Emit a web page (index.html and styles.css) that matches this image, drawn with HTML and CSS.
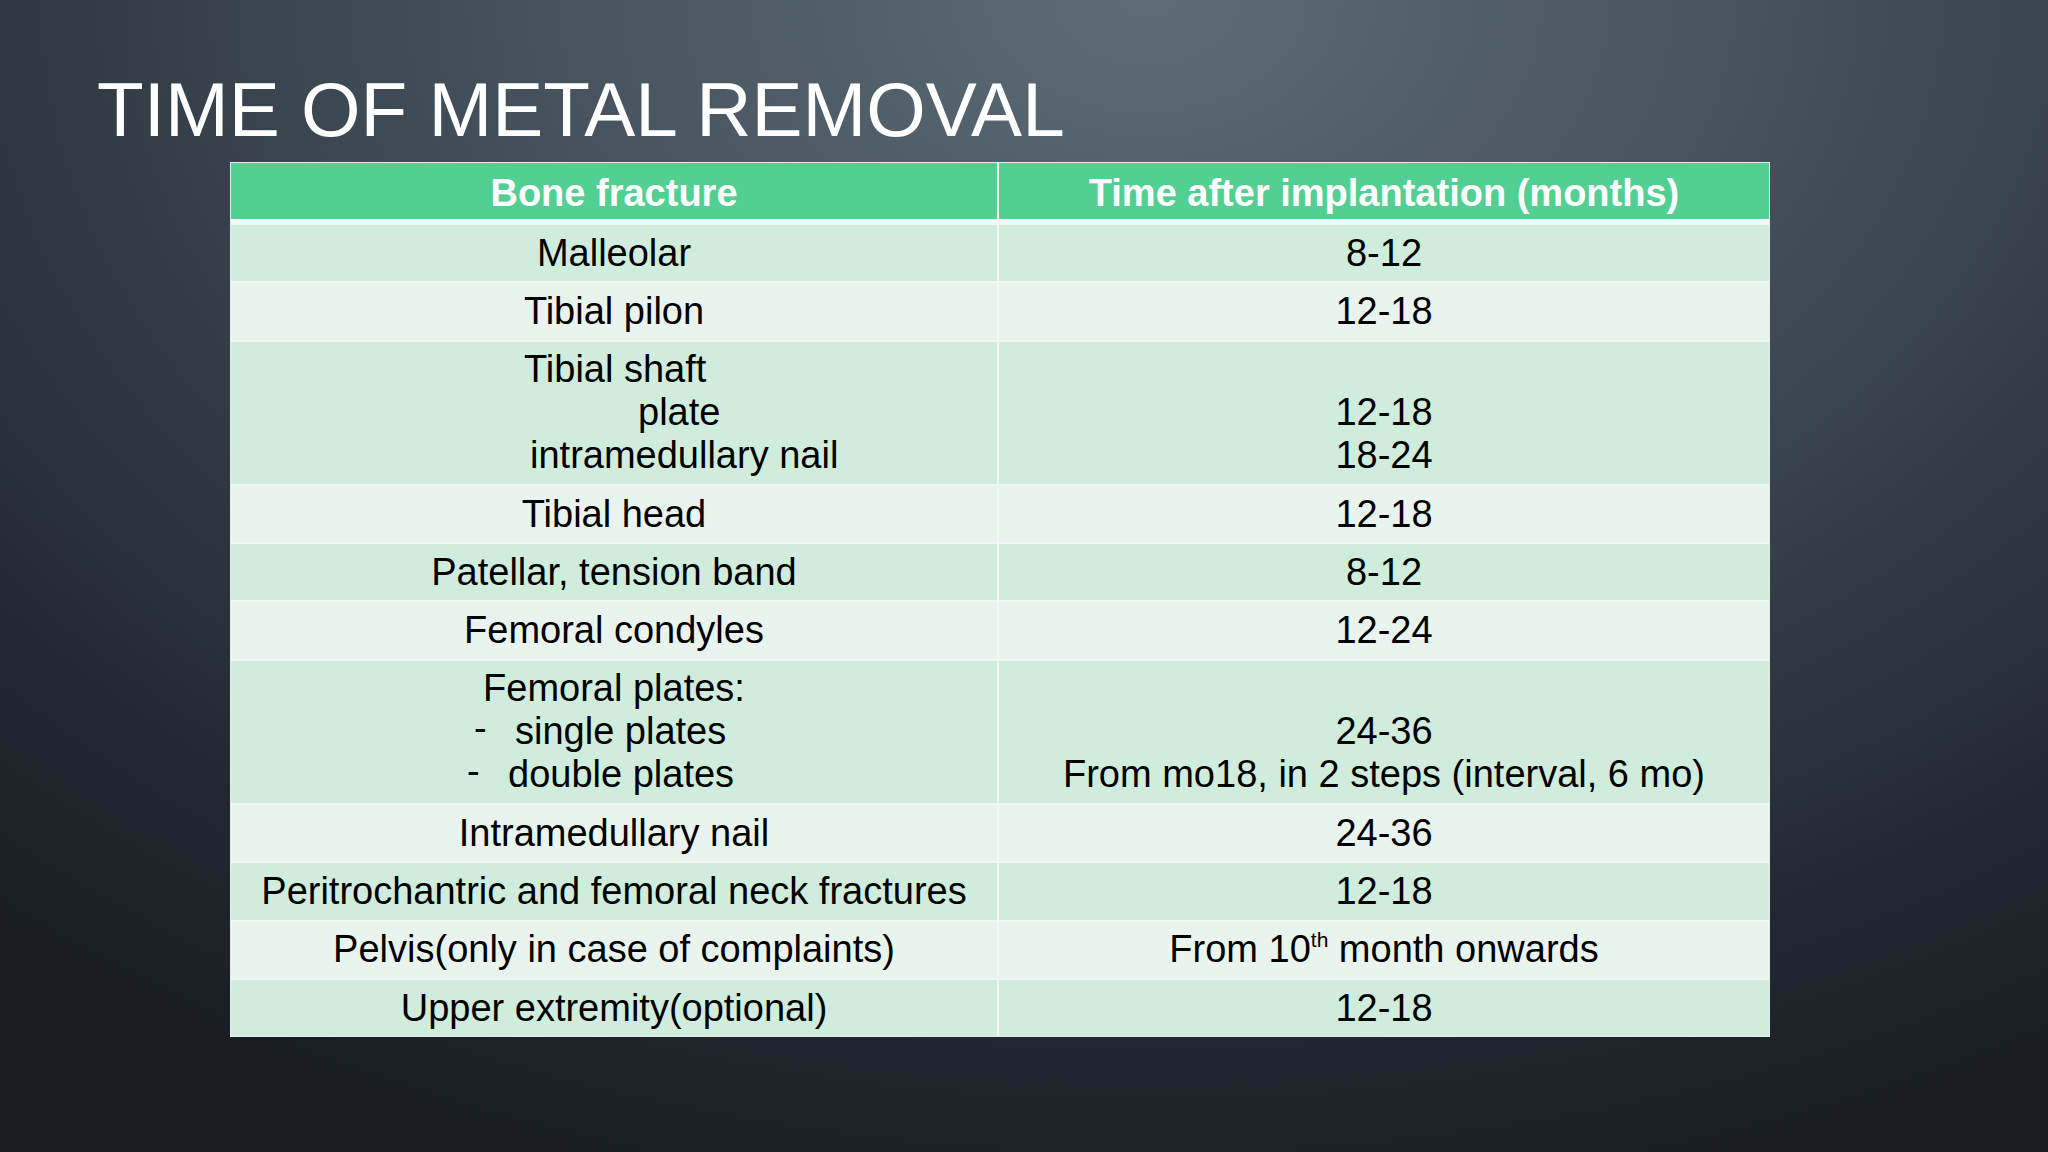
FILE: index.html
```html
<!DOCTYPE html>
<html lang="en">
<head>
<meta charset="utf-8">
<title>Time of Metal Removal</title>
<link rel="stylesheet" href="styles.css">
</head>
<body>
<main class="slide">
  <h1 class="title">TIME OF METAL REMOVAL</h1>
  <table class="grid">
    <colgroup>
      <col class="col-a">
      <col class="col-b">
    </colgroup>
    <thead>
      <tr>
        <th>Bone fracture</th>
        <th>Time after implantation (months)</th>
      </tr>
    </thead>
    <tbody>
      <tr class="odd"><td>Malleolar</td><td>8-12</td></tr>
      <tr class="even"><td>Tibial pilon</td><td>12-18</td></tr>
      <tr class="odd">
        <td>
          <div class="stack shaft">
            <div class="ln">Tibial shaft</div>
            <div class="ln ind-plate">plate</div>
            <div class="ln ind-nail">intramedullary nail</div>
          </div>
        </td>
        <td>
          <div class="ln">&nbsp;</div>
          <div class="ln">12-18</div>
          <div class="ln">18-24</div>
        </td>
      </tr>
      <tr class="even"><td>Tibial head</td><td>12-18</td></tr>
      <tr class="odd"><td>Patellar, tension band</td><td>8-12</td></tr>
      <tr class="even"><td>Femoral condyles</td><td>12-24</td></tr>
      <tr class="odd">
        <td>
          <div class="ln">Femoral plates:</div>
          <div class="ln dash-line"><span class="dash">-</span>single plates</div>
          <div class="ln dash-line dbl"><span class="dash">-</span>double plates</div>
        </td>
        <td>
          <div class="ln">&nbsp;</div>
          <div class="ln">24-36</div>
          <div class="ln">From mo18, in 2 steps (interval, 6 mo)</div>
        </td>
      </tr>
      <tr class="even"><td>Intramedullary nail</td><td>24-36</td></tr>
      <tr class="odd"><td>Peritrochantric and femoral neck fractures</td><td>12-18</td></tr>
      <tr class="even"><td>Pelvis(only in case of complaints)</td><td>From 10<sup class="sup">th</sup> month onwards</td></tr>
      <tr class="odd"><td>Upper extremity(optional)</td><td>12-18</td></tr>
    </tbody>
  </table>
</main>
</body>
</html>
```

FILE: styles.css
```css
html, body {
  margin: 0;
  padding: 0;
  width: 2048px;
  height: 1152px;
  overflow: hidden;
}

body {
  font-family: "Liberation Sans", Arial, sans-serif;
  background:
    radial-gradient(ellipse 85% 105% at 56% 0%, #5d6c77 0%, #4b5863 28%, #36414b 55%, #232a32 82%, #1a1e24 100%);
  background-color: #1b1f26;
}

.slide {
  padding: 72px 0 0 97px;
  box-sizing: border-box;
  height: 1152px;
}

.title {
  margin: 0 0 13.5px 0;
  font-weight: 400;
  font-size: 76.5px;
  line-height: 76.5px;
  color: #ffffff;
  letter-spacing: 0;
}

.grid {
  margin-left: 133px;
  width: 1538px;
  border-collapse: separate;
  border-spacing: 0;
  border: 1px solid #e6ece9;
  table-layout: fixed;
  font-size: 38px;
  color: #000;
}

.col-a { width: 768px; }
.col-b { width: 770px; }

.grid th,
.grid td {
  text-align: center;
  vertical-align: top;
  line-height: 43px;
  padding: 6.7px 0 6.6px 0;
  border-bottom: 2px solid #f4f7f5;
}

.grid th:first-child,
.grid td:first-child {
  border-right: 2px solid #f4f7f5;
}

.grid th {
  background: #52cf93;
  color: #ffffff;
  font-weight: 700;
  padding: 8.5px 0 4.5px 0;
  border-bottom: 6px solid #f4f7f5;
}

.grid tbody tr:last-child td {
  border-bottom: 0;
}

.odd td { background: #d0ecdd; }
.even td { background: #e9f4ee; }

.ln {
  white-space: nowrap;
}

.stack {
  text-align: left;
}

.shaft .ln { padding-left: 293px; }
.shaft .ind-plate { padding-left: 407px; }
.shaft .ind-nail { padding-left: 299px; }

.dash-line {
  text-align: left;
  padding-left: 243px;
}

.dash-line.dbl {
  padding-left: 236px;
}

.dash {
  display: inline-block;
  width: 41px;
  position: relative;
  top: -3px;
}

.sup {
  font-size: 21px;
  line-height: 0;
  vertical-align: baseline;
  position: relative;
  top: -15px;
}
```
